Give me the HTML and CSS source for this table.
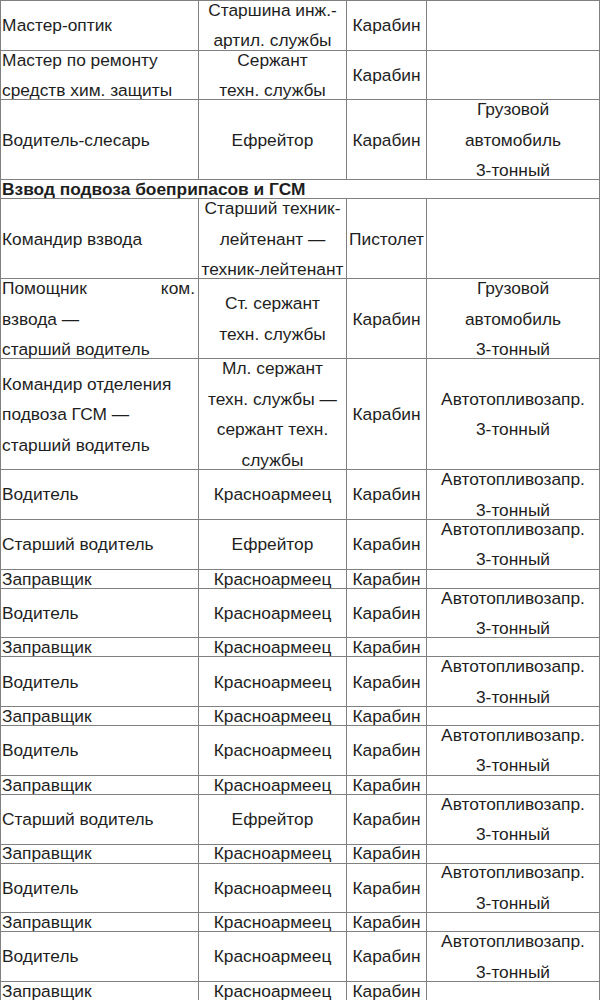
FILE: index.html
```html
<!DOCTYPE html>
<html lang="ru">
<head>
<meta charset="utf-8">
<title>Взвод подвоза боеприпасов и ГСМ</title>
<link rel="stylesheet" href="styles.css">
</head>
<body>
<table class="staff">
  <colgroup>
    <col class="c-pos">
    <col class="c-rank">
    <col class="c-arm">
    <col class="c-veh">
  </colgroup>
  <tbody>
    <tr>
      <td class="pos"><div class="cell h2">Мастер-оптик</div></td>
      <td class="mid"><div class="cell h2">Старшина инж.-<br>артил. службы</div></td>
      <td class="mid"><div class="cell h2">Карабин</div></td>
      <td class="mid"><div class="cell h2"></div></td>
    </tr>
    <tr>
      <td class="pos"><div class="cell h2">Мастер по ремонту<br>средств хим. защиты</div></td>
      <td class="mid"><div class="cell h2">Сержант<br>техн. службы</div></td>
      <td class="mid"><div class="cell h2">Карабин</div></td>
      <td class="mid"><div class="cell h2"></div></td>
    </tr>
    <tr>
      <td class="pos"><div class="cell h3">Водитель-слесарь</div></td>
      <td class="mid"><div class="cell h3">Ефрейтор</div></td>
      <td class="mid"><div class="cell h3">Карабин</div></td>
      <td class="mid"><div class="cell h3">Грузовой<br>автомобиль<br>3-тонный</div></td>
    </tr>
    <tr>
      <td class="section" colspan="4"><div class="cell h1">Взвод подвоза боеприпасов и ГСМ</div></td>
    </tr>
    <tr>
      <td class="pos"><div class="cell h3">Командир взвода</div></td>
      <td class="mid"><div class="cell h3">Старший техник-<br>лейтенант —<br>техник-лейтенант</div></td>
      <td class="mid"><div class="cell h3">Пистолет</div></td>
      <td class="mid"><div class="cell h3"></div></td>
    </tr>
    <tr>
      <td class="pos"><div class="cell h3"><span class="just">Помощник ком.</span>взвода —<br>старший водитель</div></td>
      <td class="mid"><div class="cell h3">Ст. сержант<br>техн. службы</div></td>
      <td class="mid"><div class="cell h3">Карабин</div></td>
      <td class="mid"><div class="cell h3">Грузовой<br>автомобиль<br>3-тонный</div></td>
    </tr>
    <tr>
      <td class="pos"><div class="cell h4">Командир отделения<br>подвоза ГСМ —<br>старший водитель</div></td>
      <td class="mid"><div class="cell h4">Мл. сержант<br>техн. службы —<br>сержант техн.<br>службы</div></td>
      <td class="mid"><div class="cell h4">Карабин</div></td>
      <td class="mid"><div class="cell h4">Автотопливозапр.<br>3-тонный</div></td>
    </tr>
    <tr>
      <td class="pos"><div class="cell h2">Водитель</div></td>
      <td class="mid"><div class="cell h2">Красноармеец</div></td>
      <td class="mid"><div class="cell h2">Карабин</div></td>
      <td class="mid"><div class="cell h2">Автотопливозапр.<br>3-тонный</div></td>
    </tr>
    <tr>
      <td class="pos"><div class="cell h2">Старший водитель</div></td>
      <td class="mid"><div class="cell h2">Ефрейтор</div></td>
      <td class="mid"><div class="cell h2">Карабин</div></td>
      <td class="mid"><div class="cell h2">Автотопливозапр.<br>3-тонный</div></td>
    </tr>
    <tr>
      <td class="pos"><div class="cell h1">Заправщик</div></td>
      <td class="mid"><div class="cell h1">Красноармеец</div></td>
      <td class="mid"><div class="cell h1">Карабин</div></td>
      <td class="mid"><div class="cell h1"></div></td>
    </tr>
    <tr>
      <td class="pos"><div class="cell h2">Водитель</div></td>
      <td class="mid"><div class="cell h2">Красноармеец</div></td>
      <td class="mid"><div class="cell h2">Карабин</div></td>
      <td class="mid"><div class="cell h2">Автотопливозапр.<br>3-тонный</div></td>
    </tr>
    <tr>
      <td class="pos"><div class="cell h1">Заправщик</div></td>
      <td class="mid"><div class="cell h1">Красноармеец</div></td>
      <td class="mid"><div class="cell h1">Карабин</div></td>
      <td class="mid"><div class="cell h1"></div></td>
    </tr>
    <tr>
      <td class="pos"><div class="cell h2">Водитель</div></td>
      <td class="mid"><div class="cell h2">Красноармеец</div></td>
      <td class="mid"><div class="cell h2">Карабин</div></td>
      <td class="mid"><div class="cell h2">Автотопливозапр.<br>3-тонный</div></td>
    </tr>
    <tr>
      <td class="pos"><div class="cell h1">Заправщик</div></td>
      <td class="mid"><div class="cell h1">Красноармеец</div></td>
      <td class="mid"><div class="cell h1">Карабин</div></td>
      <td class="mid"><div class="cell h1"></div></td>
    </tr>
    <tr>
      <td class="pos"><div class="cell h2">Водитель</div></td>
      <td class="mid"><div class="cell h2">Красноармеец</div></td>
      <td class="mid"><div class="cell h2">Карабин</div></td>
      <td class="mid"><div class="cell h2">Автотопливозапр.<br>3-тонный</div></td>
    </tr>
    <tr>
      <td class="pos"><div class="cell h1">Заправщик</div></td>
      <td class="mid"><div class="cell h1">Красноармеец</div></td>
      <td class="mid"><div class="cell h1">Карабин</div></td>
      <td class="mid"><div class="cell h1"></div></td>
    </tr>
    <tr>
      <td class="pos"><div class="cell h2">Старший водитель</div></td>
      <td class="mid"><div class="cell h2">Ефрейтор</div></td>
      <td class="mid"><div class="cell h2">Карабин</div></td>
      <td class="mid"><div class="cell h2">Автотопливозапр.<br>3-тонный</div></td>
    </tr>
    <tr>
      <td class="pos"><div class="cell h1">Заправщик</div></td>
      <td class="mid"><div class="cell h1">Красноармеец</div></td>
      <td class="mid"><div class="cell h1">Карабин</div></td>
      <td class="mid"><div class="cell h1"></div></td>
    </tr>
    <tr>
      <td class="pos"><div class="cell h2">Водитель</div></td>
      <td class="mid"><div class="cell h2">Красноармеец</div></td>
      <td class="mid"><div class="cell h2">Карабин</div></td>
      <td class="mid"><div class="cell h2">Автотопливозапр.<br>3-тонный</div></td>
    </tr>
    <tr>
      <td class="pos"><div class="cell h1">Заправщик</div></td>
      <td class="mid"><div class="cell h1">Красноармеец</div></td>
      <td class="mid"><div class="cell h1">Карабин</div></td>
      <td class="mid"><div class="cell h1"></div></td>
    </tr>
    <tr>
      <td class="pos"><div class="cell h2">Водитель</div></td>
      <td class="mid"><div class="cell h2">Красноармеец</div></td>
      <td class="mid"><div class="cell h2">Карабин</div></td>
      <td class="mid"><div class="cell h2">Автотопливозапр.<br>3-тонный</div></td>
    </tr>
    <tr>
      <td class="pos"><div class="cell h1">Заправщик</div></td>
      <td class="mid"><div class="cell h1">Красноармеец</div></td>
      <td class="mid"><div class="cell h1">Карабин</div></td>
      <td class="mid"><div class="cell h1"></div></td>
    </tr>
  </tbody>
</table>
</body>
</html>
```

FILE: styles.css
```css
html, body {
  margin: 0;
  padding: 0;
  background: #ffffff;
}

body {
  font-family: "Liberation Sans", Arial, sans-serif;
  font-size: 17.33px;
  line-height: 30.5px;
  color: #1e1e1e;
}

.staff {
  width: 600px;
  table-layout: fixed;
  border-collapse: separate;
  border-spacing: 0;
  border-top: 1px solid #808080;
  border-left: 1px solid #808080;
}

.c-pos { width: 198px; }
.c-rank { width: 148px; }
.c-arm { width: 80px; }
.c-veh { width: 173px; }

.staff td {
  padding: 0;
  border-right: 1px solid #808080;
  border-bottom: 1px solid #808080;
  vertical-align: middle;
}

.cell {
  display: flex;
  flex-direction: column;
  justify-content: center;
  overflow: visible;
  white-space: nowrap;
}

.pos .cell {
  padding: 0 3px 0 1px;
  text-align: left;
}

.mid .cell {
  text-align: center;
}

.section .cell {
  padding: 0 1px;
  font-weight: bold;
  text-align: left;
}

.just {
  display: block;
  text-align: justify;
  text-align-last: justify;
}

.h1 { height: 18px; }
.h2 { height: 48.7px; }
.h3 { height: 79px; }
.h4 { height: 110px; }
```
